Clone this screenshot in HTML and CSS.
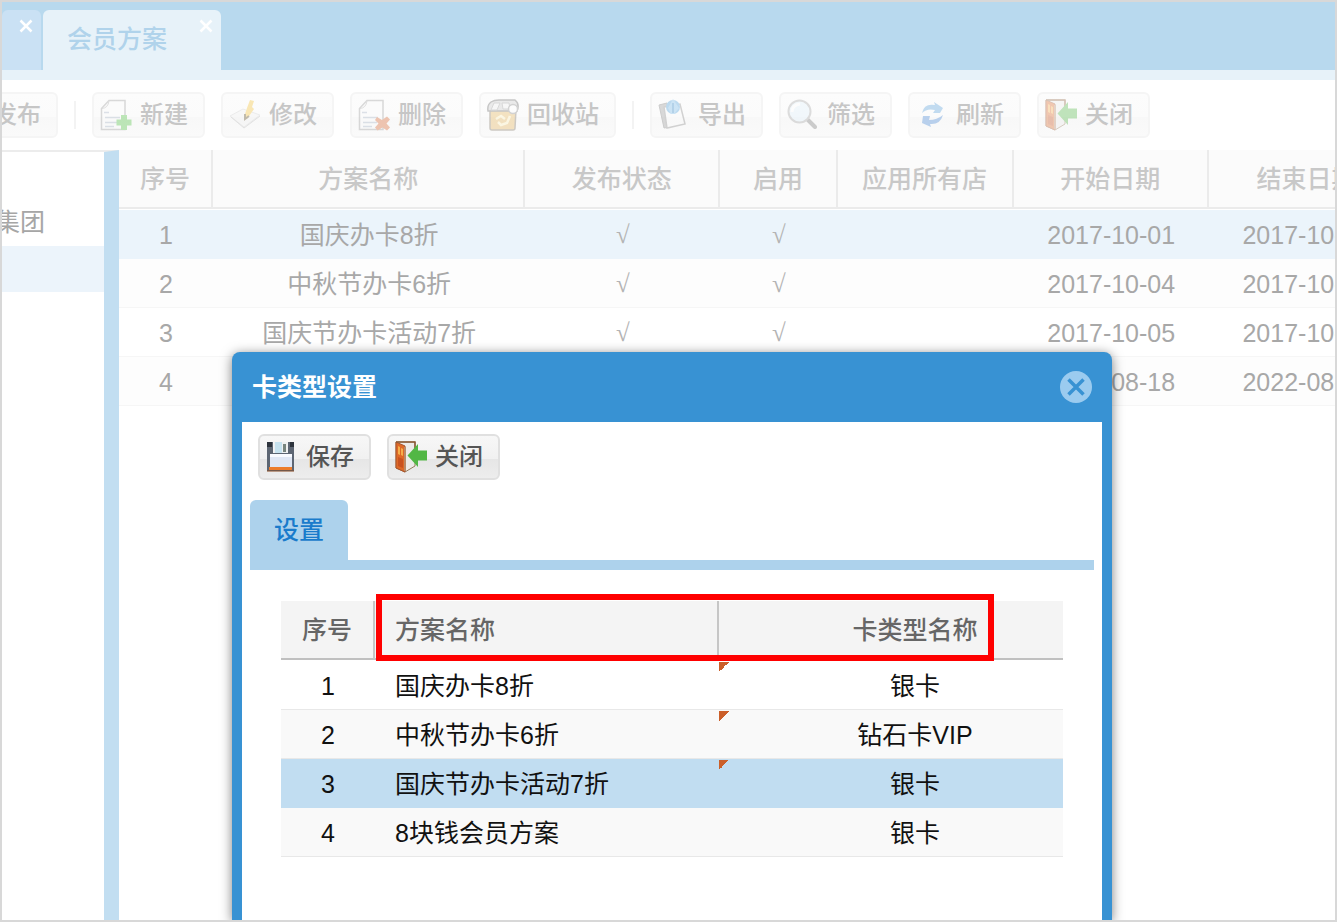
FILE: index.html
```html
<!DOCTYPE html>
<html lang="zh-CN">
<head>
<meta charset="utf-8">
<title>会员方案</title>
<link rel="stylesheet" href="styles.css">
</head>
<body>
<svg class="defs" aria-hidden="true">
  <defs>
    <symbol id="i-page" viewBox="0 0 32 32">
      <path d="M9 1.500H25V30.500H1.500V9.500Z" fill="#fbfbfb" stroke="#999" stroke-width="1.500"/>
      <path d="M2 9.500Q8 9 9 2" fill="none" stroke="#a8a8a8"/>
      <path d="M4 13.500H9M5 18.500H20M5 23.500H19M5 27.500H14" stroke="#a3b1c4" stroke-width="1.500"/>
    </symbol>
    <symbol id="i-new" viewBox="0 0 32 32">
      <use href="#i-page"/>
      <path d="M21 16H27V20.500H31.500V26.500H27V31H21V26.500H16.500V20.500H21Z" fill="#4cc13f"/>
    </symbol>
    <symbol id="i-delete" viewBox="0 0 32 32">
      <use href="#i-page"/>
      <path d="M19 18L24 21L29 17.500L32 20.500L28.500 24.500L32 28.500L29 31.500L24.500 28.500L19.500 31.500L17 28.500L20.500 24.500L17 21Z" fill="#d9632c"/>
    </symbol>
    <symbol id="i-edit" viewBox="0 0 32 32">
      <path d="M1 17L14 10L31 16L15 28Z" fill="#f1f1f1" stroke="#d0d0d0"/>
      <path d="M2 18L15 29L31 17" fill="none" stroke="#b5b5b5"/>
      <path d="M15 18L18 9L21 1L25 2L23 8L25 10L18 20Z" fill="#f6c232"/>
      <path d="M16 15V20L20 17" fill="none" stroke="#58451d" stroke-width="2"/>
    </symbol>
    <symbol id="i-recycle" viewBox="0 0 32 32">
      <path d="M3 10H29L28 29Q28 31 26 31H5Q3 31 3 29Z" fill="#e6b457" stroke="#7d7260" stroke-width="1.500"/>
      <path d="M1 12Q0 6 4 3Q7 1 12 1L28 1Q33 5 30 12Z" fill="#c9c9c9" stroke="#666" stroke-width="1.500"/>
      <path d="M4 11L7 4H13L10 11ZM15 4H22L23 10H16Z" fill="#eee" stroke="#999"/>
      <circle cx="26" cy="10" r="4.500" fill="#fff" stroke="#888" stroke-width="1.500"/>
      <path d="M9 20L14 17L18 20M23 17L20 24L14 26L11 23" fill="none" stroke="#fff2bb" stroke-width="2.500"/>
    </symbol>
    <symbol id="i-export" viewBox="0 0 32 32">
      <path d="M1 6L9 4L12 28L6 29Z" fill="#999" stroke="#777"/>
      <path d="M6 8L22 5L27 25L9 29Z" fill="#fafafa" stroke="#888" stroke-width="1.500"/>
      <circle cx="15" cy="8" r="7" fill="#4a9edb"/>
      <path d="M10 9L15 0L21 9L16 15H13Z" fill="#75b9e9"/>
      <path d="M15 4V14" stroke="#2f86c6" stroke-width="2"/>
    </symbol>
    <symbol id="i-search" viewBox="0 0 32 32">
      <path d="M20 20L28 28" stroke="#777" stroke-width="4" stroke-linecap="round"/>
      <circle cx="12.500" cy="12.500" r="11" fill="#e1f2fb" stroke="#a5a5a5" stroke-width="2"/>
      <path d="M5 13Q5 6 13 5" fill="none" stroke="#fff" stroke-width="3"/>
    </symbol>
    <symbol id="i-refresh" viewBox="0 0 32 32">
      <path d="M6 14Q8 4 19 6L18 3L27 9L24 14H17L19 11Q11 9 6 14Z" fill="#58a0dc"/>
      <path d="M27 16Q24 26 14 25L15 28L6 24L7 17H14L13 21Q21 21 27 16Z" fill="#4286d6"/>
    </symbol>
    <symbol id="i-close" viewBox="0 0 32 32">
      <path d="M1 1H20V25L10 31L1 27Z" fill="#eceae8" stroke="#977c5c"/>
      <path d="M1 1L10 5V31L1 27Z" fill="#de6826" stroke="#a8552c"/>
      <path d="M3 5L5 6V14L3 13ZM6 7L8 8V15L6 14Z" fill="#f6ae4a"/>
      <path d="M3 16L8 18V27L3 25Z" fill="#c9521f"/>
      <path d="M10 6V30" stroke="#b98a68" stroke-width="2"/>
      <path d="M1 1H20V9" fill="none" stroke="#8a5a36" stroke-width="1.500"/>
      <path d="M12.500 14.500L23 3V9.500H32V19.500H23V26Z" fill="#52b745"/>
    </symbol>
    <symbol id="i-save" viewBox="0 0 32 32">
      <path d="M1 1H7V12H22V1H28V30H1Z" fill="#5d6673"/>
      <path d="M1 1H6V6H1ZM24 1H28V6H24Z" fill="#2d333c"/>
      <path d="M8 1H22V12H8Z" fill="#eef0f1"/>
      <path d="M9 1H16V12H9Z" fill="#c6e2ef"/>
      <path d="M17 3H20V11H17Z" fill="#78857f"/>
      <path d="M4 13H26V26H4Z" fill="#dfe7f5"/>
      <path d="M4 13H26V16H4Z" fill="#f8faff"/>
      <path d="M3 26H26V29H3Z" fill="#ec7d2e"/>
      <path d="M1 30H28" stroke="#8a4a22"/>
    </symbol>
    <symbol id="i-x" viewBox="0 0 14 14">
      <path d="M1.500 1.500L12.500 12.500M12.500 1.500L1.500 12.500" stroke="#fff" stroke-width="2.500"/>
    </symbol>
  </defs>
</svg>

<div class="frame">
  <div class="page">
    <nav class="tabs">
      <div class="tab tab-prev"><button class="tab-x" aria-label="关闭标签"><svg><use href="#i-x"/></svg></button></div>
      <div class="tab tab-active"><span class="tab-name">会员方案</span><button class="tab-x" aria-label="关闭标签"><svg><use href="#i-x"/></svg></button></div>
    </nav>
    <div class="toolbar toolbar-main">
      <button class="btn btn-first"><svg class="icon"><use href="#i-export"/></svg>发布</button>
      <span class="sep"></span>
      <button class="btn"><svg class="icon"><use href="#i-new"/></svg>新建</button>
      <button class="btn"><svg class="icon"><use href="#i-edit"/></svg>修改</button>
      <button class="btn"><svg class="icon"><use href="#i-delete"/></svg>删除</button>
      <button class="btn"><svg class="icon"><use href="#i-recycle"/></svg>回收站</button>
      <span class="sep"></span>
      <button class="btn"><svg class="icon"><use href="#i-export"/></svg>导出</button>
      <button class="btn"><svg class="icon"><use href="#i-search"/></svg>筛选</button>
      <button class="btn"><svg class="icon"><use href="#i-refresh"/></svg>刷新</button>
      <button class="btn"><svg class="icon"><use href="#i-close"/></svg>关闭</button>
    </div>
    <div class="content">
      <aside class="tree">
        <div class="node">集团</div>
        <div class="node node-selected"></div>
      </aside>
      <main class="list">
        <table class="grid plans">
          <colgroup><col class="c-no"><col class="c-name"><col class="c-date"><col class="c-on"><col class="c-all"><col class="c-date"><col class="c-date"></colgroup>
          <thead><tr><th>序号</th><th>方案名称</th><th>发布状态</th><th>启用</th><th>应用所有店</th><th>开始日期</th><th>结束日期</th></tr></thead>
          <tbody>
            <tr class="selected"><td>1</td><td>国庆办卡8折</td><td class="tick">√</td><td class="tick">√</td><td></td><td>2017-10-01</td><td>2017-10-07</td></tr>
            <tr><td>2</td><td>中秋节办卡6折</td><td class="tick">√</td><td class="tick">√</td><td></td><td>2017-10-04</td><td>2017-10-05</td></tr>
            <tr><td>3</td><td>国庆节办卡活动7折</td><td class="tick">√</td><td class="tick">√</td><td></td><td>2017-10-05</td><td>2017-10-08</td></tr>
            <tr><td>4</td><td></td><td></td><td></td><td></td><td>2017-08-18</td><td>2022-08-18</td></tr>
          </tbody>
        </table>
      </main>
    </div>
  </div>

  <section class="dialog" role="dialog" aria-labelledby="dialog-title">
    <header class="dialog-head">
      <h2 id="dialog-title">卡类型设置</h2>
      <button class="dialog-x" aria-label="关闭"><svg viewBox="0 0 32 32"><circle cx="16" cy="16" r="16" fill="#9bcbef"/><path d="M8.500 8.500L23.500 23.500M23.500 8.500L8.500 23.500" stroke="#3892d3" stroke-width="3.500"/></svg></button>
    </header>
    <div class="dialog-body">
      <div class="toolbar">
        <button class="btn"><svg class="icon"><use href="#i-save"/></svg>保存</button>
        <button class="btn"><svg class="icon"><use href="#i-close"/></svg>关闭</button>
      </div>
      <div class="subtabs"><button class="subtab">设置</button></div>
      <div class="types">
        <table class="grid">
          <colgroup><col class="d-no"><col class="d-name"><col></colgroup>
          <thead><tr><th>序号</th><th class="left">方案名称</th><th class="wide">卡类型名称</th></tr></thead>
          <tbody>
            <tr><td>1</td><td class="left">国庆办卡8折</td><td class="wide edited">银卡</td></tr>
            <tr><td>2</td><td class="left">中秋节办卡6折</td><td class="wide edited">钻石卡VIP</td></tr>
            <tr class="selected"><td>3</td><td class="left">国庆节办卡活动7折</td><td class="wide edited">银卡</td></tr>
            <tr><td>4</td><td class="left">8块钱会员方案</td><td class="wide">银卡</td></tr>
          </tbody>
        </table>
        <div class="highlight"></div>
      </div>
    </div>
  </section>
</div>
</body>
</html>
```
FILE: styles.css
```css
* { box-sizing: border-box; }

body {
  margin: 0;
  font: 25px/32px "Liberation Sans", "Noto Sans CJK SC", sans-serif;
  color: #111;
  background: #fff;
}

button { font: inherit; border: 0; padding: 0; background: none; }

.defs { position: absolute; width: 0; height: 0; }

.frame {
  position: relative;
  height: 100vh;
  border: 2px solid #d8d8d8;
  overflow: hidden;
}

.page { display: flex; flex-direction: column; height: 100%; }

/* top tabs */
.tabs {
  display: flex;
  align-items: flex-end;
  gap: 2px;
  height: 78px;
  padding-top: 8px;
  background: #b8d9ee;
  border-bottom: 10px solid #e7f2f9;
}
.tab { display: flex; align-items: flex-start; justify-content: flex-end; height: 60px; border-radius: 6px 6px 0 0; }
.tab-prev { width: 39px; padding: 9px 8px 0 0; background: #cae1f4; }
.tab-active { width: 178px; padding: 9px 8px 0 24px; background: #e7f2f9; justify-content: space-between; }
.tab-name { padding-top: 4px; font-weight: 500; color: #b0d3eb; }
.tab-x { width: 14px; height: 14px; }
.tab-x svg { display: block; width: 14px; height: 14px; }

/* toolbars */
.toolbar { display: flex; align-items: center; gap: 16px; }
.toolbar-main { padding: 12px 0; }
.btn {
  display: flex;
  flex: none;
  align-items: center;
  gap: 8px;
  height: 46px;
  padding: 0 15px 0 6px;
  border: 2px solid #e0e0e0;
  border-radius: 6px;
  background: linear-gradient(#f7f7f7, #f1f1f1 54%, #e6e6e6 55%, #ededed);
  font-size: 24px;
  font-weight: 500;
  color: #555;
}
.icon { width: 32px; height: 32px; }
.toolbar-main .btn { border-color: #f5f5f5; background: linear-gradient(#fcfcfc, #fbfbfb 54%, #f8f8f8 55%, #fafafa); color: #c6c6c6; }
.toolbar-main .icon { opacity: 0.35; }
.toolbar-main .btn-first { margin-left: -57px; }
.sep { flex: none; width: 2px; height: 28px; background: #f3f3f3; }

/* page content */
.content { display: flex; flex: 1; min-height: 0; }
.tree {
  flex: none;
  width: 117px;
  border-top: 2px solid #ececec;
  border-right: 15px solid #c2def1;
  padding-top: 48px;
  overflow: hidden;
  color: #a6a6a6;
}
.node { height: 46px; margin-left: -7px; line-height: 44px; }
.node-selected { background: #ecf4fb; }
.list { flex: 1; min-width: 0; overflow: hidden; }

/* tables */
.grid { border-collapse: separate; border-spacing: 0; table-layout: fixed; width: 100%; }
.grid th {
  height: 59px;
  padding: 0;
  border-right: 2px solid #c6c6c6;
  border-bottom: 2px solid #c0c0c0;
  background: #f4f4f4;
  color: #666;
  font-weight: 500;
}
.grid th:last-child { border-right: 0; }
.grid td {
  height: 49px;
  padding: 2px 0 0;
  border-bottom: 1px solid #e8e8e8;
  text-align: center;
}
.grid tbody::before { content: ""; display: table-row; height: 1px; }
.grid tr:nth-child(even) td { background-color: #f9f9f9; }
.grid .selected td { background-color: #c1ddf1; border-color: #c1ddf1; }
.grid .left { padding-left: 20px; text-align: left; }
.grid .wide { padding-left: 48px; }

.plans { width: 1285px; color: #a8a8a8; }
.plans th { background: #fbfbfb; border-color: #ebebeb; color: #c8c8c8; }
.plans td { border-color: #f6f6f6; }
.plans tr:nth-child(even) td { background-color: #fdfdfd; }
.plans .selected td { background-color: #ebf4fb; border-color: #ebf4fb; }
.plans .tick { font-family: "Liberation Serif", serif; color: #b4b4b4; }
.c-no { width: 94px; }
.c-name { width: 312px; }
.c-date { width: 195px; }
.c-on { width: 117px; }
.c-all { width: 176px; }

/* dialog */
.dialog {
  position: absolute;
  top: 350px;
  bottom: 0;
  left: 230px;
  display: flex;
  flex-direction: column;
  width: 880px;
  padding: 0 10px;
  border-radius: 8px 8px 0 0;
  background: #3892d3;
  box-shadow: 0 2px 12px rgba(0, 0, 0, 0.5);
}
.dialog-head { display: flex; align-items: center; justify-content: space-between; height: 70px; padding: 0 10px; }
.dialog-head h2 { margin: 0; font-size: 25px; color: #fff; }
.dialog-x, .dialog-x svg { display: block; width: 32px; height: 32px; }
.dialog-body { flex: 1; padding: 12px 8px; background: #fff; }
.dialog-body .toolbar { padding: 0 8px; }
.subtabs { display: flex; margin-top: 20px; border-bottom: 10px solid #add2ec; }
.subtab {
  height: 60px;
  padding: 0 24px;
  border-radius: 6px 6px 0 0;
  background: #add2ec;
  color: #1a7bcb;
  font-weight: 500;
}
.types { position: relative; margin: 31px 31px 0; }
.d-no { width: 94px; }
.d-name { width: 344px; }
/* corner mark of a changed cell */
.grid .edited {
  background-image: linear-gradient(135deg, #cb5f2a 50%, transparent 50%);
  background-size: 10px 10px;
  background-position: 0 1px;
  background-repeat: no-repeat;
}
.highlight {
  position: absolute;
  top: -7px;
  left: 95px;
  width: 618px;
  height: 67px;
  border: 6px solid #f00;
}
```
